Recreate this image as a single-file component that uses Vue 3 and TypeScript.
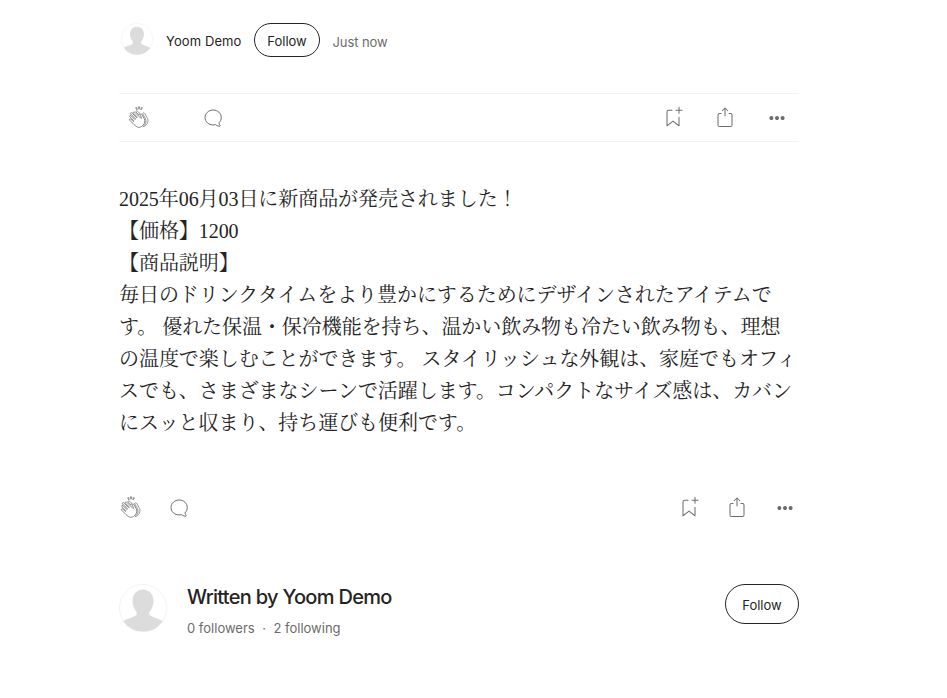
<template>
  <div class="page">
    <div class="meta">
      <svg class="avatar-small" viewBox="0 0 48 48"><use href="#avatar-shape" /></svg>
      <span class="author">Yoom Demo</span>
      <button class="follow-small">Follow</button>
      <span class="time">Just now</span>
    </div>

    <div class="actions top">
      <div class="group">
        <svg class="icon clap" viewBox="0 0 24 24"><use href="#icon-clap" /></svg>
        <svg class="icon" viewBox="0 0 24 24"><use href="#icon-reply" /></svg>
      </div>
      <div class="group right">
        <svg class="icon" viewBox="0 0 24 24"><use href="#icon-save" /></svg>
        <svg class="icon" viewBox="0 0 24 24"><use href="#icon-share" /></svg>
        <svg class="icon" viewBox="0 0 24 24"><use href="#icon-more" /></svg>
      </div>
    </div>

    <div class="article">
      <p v-for="line in lines" :key="line">{{ line }}</p>
    </div>

    <div class="actions bottom">
      <div class="group">
        <svg class="icon clap" viewBox="0 0 24 24"><use href="#icon-clap" /></svg>
        <svg class="icon" viewBox="0 0 24 24"><use href="#icon-reply" /></svg>
      </div>
      <div class="group right">
        <svg class="icon" viewBox="0 0 24 24"><use href="#icon-save" /></svg>
        <svg class="icon" viewBox="0 0 24 24"><use href="#icon-share" /></svg>
        <svg class="icon" viewBox="0 0 24 24"><use href="#icon-more" /></svg>
      </div>
    </div>

    <div class="written">
      <svg class="avatar-large" viewBox="0 0 48 48"><use href="#avatar-shape" /></svg>
      <div class="written-info">
        <div class="written-name">Written by Yoom Demo</div>
        <div class="written-stats">
          <span>0 followers</span>
          <span class="dot">·</span>
          <span>2 following</span>
        </div>
      </div>
      <button class="follow-large">Follow</button>
    </div>

    <svg class="defs" width="0" height="0">
      <defs>
        <g id="avatar-shape">
          <circle cx="24" cy="24" r="23.6" fill="#fff" stroke="#f0f0f0" stroke-width="0.8" />
          <path fill="#dcdcdc" d="M24 5.500c6.400 0 10.500 5 10.500 11.500 0 4.500-1.800 8-3.700 10.400-1 1.300-.8 3.500.7 4.400 3 1.800 8.500 3 12.200 5.200A23.600 23.600 0 0 1 24 47.600 23.600 23.600 0 0 1 4.300 37c3.700-2.200 9.200-3.400 12.200-5.200 1.500-.9 1.700-3.100.7-4.400-1.900-2.400-3.700-5.900-3.700-10.400C13.500 10.500 17.600 5.500 24 5.500z" />
        </g>
        <g id="icon-clap">
          <path fill-rule="evenodd" clip-rule="evenodd" d="M11.37.828 12 3.282l.63-2.454zM15.421 1.84l-1.185-.388-.338 2.5zM9.757 1.452l-1.184.389 1.523 2.112zM20.253 11.84 17.75 7.438c-.238-.353-.57-.584-.93-.643a.96.96 0 0 0-.753.183 1.13 1.13 0 0 0-.443.695c.014.019.03.033.044.053l2.352 4.138c1.614 2.95 1.1 5.771-1.525 8.395a7 7 0 0 1-.454.415c.997-.13 1.927-.61 2.773-1.457 2.705-2.704 2.517-5.585 1.438-7.377M12.066 9.01c-.129-.687.08-1.299.573-1.773l-2.062-2.063a1.123 1.123 0 0 0-1.555 0 1.1 1.1 0 0 0-.273.521z" fill="none" stroke="currentColor" stroke-width="0.7" />
          <path fill-rule="evenodd" clip-rule="evenodd" d="M14.741 8.309c-.18-.267-.446-.455-.728-.502a.67.67 0 0 0-.533.127c-.146.113-.59.458-.199 1.296l1.184 2.503a.448.448 0 0 1-.236.755.445.445 0 0 1-.483-.248L7.614 6.106A.816.816 0 1 0 6.459 7.26l3.643 3.644a.446.446 0 1 1-.631.63L5.83 7.896l-1.03-1.03a.82.82 0 0 0-1.395.577.81.81 0 0 0 .24.576l1.027 1.028 3.643 3.643a.444.444 0 0 1-.144.728.44.44 0 0 1-.486-.098l-3.64-3.64a.82.82 0 0 0-1.335.263.81.81 0 0 0 .178.89l1.535 1.534 2.287 2.288a.445.445 0 0 1-.63.63l-2.287-2.288a.813.813 0 0 0-1.393.578c0 .216.086.424.238.577l4.403 4.403c2.79 2.79 5.495 4.119 8.681.931 2.269-2.271 2.708-4.588 1.342-7.086z" fill="none" stroke="currentColor" stroke-width="0.8" />
        </g>
        <g id="icon-reply">
          <path d="M18.006 16.803c1.533-1.456 2.234-3.325 2.234-5.321C20.24 7.357 16.709 4 12.191 4S4 7.357 4 11.482c0 4.126 3.674 7.482 8.191 7.482.817 0 1.622-.111 2.393-.327.231.2.48.391.744.559 1.06.693 2.203 1.044 3.399 1.044.224-.008.4-.112.486-.287a.49.49 0 0 0-.042-.518c-.495-.67-.845-1.364-1.04-2.057a4 4 0 0 1-.125-.598z" fill="none" stroke="currentColor" stroke-width="1" />
        </g>
        <g id="icon-save">
          <path d="M17.5 1.25a.5.5 0 0 1 1 0v2.5H21a.5.5 0 0 1 0 1h-2.5v2.5a.5.5 0 0 1-1 0v-2.5H15a.5.5 0 0 1 0-1h2.5zm-11 4.5a1 1 0 0 1 1-1H11a.5.5 0 0 0 0-1H7.500a2 2 0 0 0-2 2v14a.5.5 0 0 0 .8.4l5.700-4.400 5.700 4.400a.5.5 0 0 0 .8-.4v-8.500a.5.5 0 0 0-1 0v7.480l-5.200-4a.5.5 0 0 0-.6 0l-5.200 4z" />
        </g>
        <g id="icon-share">
          <path fill-rule="evenodd" clip-rule="evenodd" d="M15.218 4.931a.4.4 0 0 1-.118.132l.012.006a.45.45 0 0 1-.292.074.5.5 0 0 1-.3-.13l-2.020-2.020v7.070c0 .28-.23.5-.5.5s-.5-.22-.5-.5v-7.040l-2 2a.45.45 0 0 1-.57.04h-.02a.4.4 0 0 1-.16-.3.4.4 0 0 1 .1-.32l2.800-2.800a.5.5 0 0 1 .7 0l2.800 2.790a.42.42 0 0 1 .068.498m-.106.138.008.004v-.01zM16 7.063h1.500a2 2 0 0 1 2 2v10a2 2 0 0 1-2 2h-11c-1.100 0-2-.9-2-2v-10a2 2 0 0 1 2-2H8a.5.5 0 0 1 .35.15.5.5 0 0 1 .15.35.5.5 0 0 1-.15.35.5.5 0 0 1-.35.15H6.400c-.5 0-.9.4-.9.9v10.200a.9.9 0 0 0 .9.9h11.200c.5 0 .9-.4.9-.9v-10.200c0-.5-.4-.9-.9-.9H16a.5.5 0 0 1 0-1" />
        </g>
        <g id="icon-more">
          <path d="M4.385 12c0 .55.2 1.020.59 1.410.39.4.86.59 1.410.59s1.020-.2 1.410-.59c.4-.39.59-.86.59-1.410s-.2-1.020-.59-1.410a1.930 1.930 0 0 0-1.410-.59c-.55 0-1.020.2-1.410.59-.4.39-.59.86-.59 1.410m5.620 0c0 .55.2 1.020.58 1.410.4.4.87.59 1.420.59s1.020-.2 1.410-.59c.4-.39.59-.86.59-1.410s-.2-1.020-.59-1.410a1.930 1.930 0 0 0-1.410-.59c-.55 0-1.030.2-1.420.59s-.58.86-.58 1.410m5.600 0c0 .55.2 1.020.58 1.410.4.4.87.59 1.430.59s1.030-.2 1.420-.59.58-.86.58-1.410-.2-1.020-.58-1.410a1.930 1.930 0 0 0-1.420-.59c-.56 0-1.040.2-1.430.59s-.58.86-.58 1.410" />
        </g>
      </defs>
    </svg>
  </div>
</template>

<script setup lang="ts">
const lines: string[] = [
  '2025年06月03日に新商品が発売されました！',
  '【価格】1200',
  '【商品説明】',
  '毎日のドリンクタイムをより豊かにするためにデザインされたアイテムです。 優れた保温・保冷機能を持ち、温かい飲み物も冷たい飲み物も、理想の温度で楽しむことができます。 スタイリッシュな外観は、家庭でもオフィスでも、さまざまなシーンで活躍します。コンパクトなサイズ感は、カバンにスッと収まり、持ち運びも便利です。'
];
</script>

<style scoped>
.page {
  width: 680px;
  margin-left: 119px;
  color: #242424;
  font-family: Inter, "Liberation Sans", "Noto Sans CJK JP", sans-serif;
}

.defs {
  position: absolute;
}

.meta {
  display: flex;
  align-items: center;
  height: 34px;
  padding-top: 23px;
  font-size: 13px;
}

.avatar-small {
  align-self: flex-start;
  width: 32px;
  height: 32px;
  margin-left: 2px;
}

.author {
  margin-left: 13px;
  margin-top: 2px;
  letter-spacing: 0.1px;
}

.follow-small,
.follow-large {
  font-family: inherit;
  color: #242424;
  background: #fff;
  border: 1px solid #242424;
  padding: 1px 0 0;
  font-size: 13px;
}

.follow-small {
  width: 66px;
  height: 34px;
  margin-left: 12px;
  padding-left: 1px;
  border-radius: 17px;
}

.time {
  margin-left: 13px;
  margin-top: 4px;
  letter-spacing: -0.1px;
  color: #6b6b6b;
}

.actions {
  display: flex;
  align-items: center;
  justify-content: space-between;
  color: #6b6b6b;
}

.actions.top {
  height: 47px;
  margin-top: 36px;
  padding: 0 10px 0 8px;
  border-top: 1px solid #f2f2f2;
  border-bottom: 1px solid #f2f2f2;
}

.actions.bottom {
  height: 48px;
  margin-top: 45px;
  padding: 0 2px 0 0;
}

.group {
  display: flex;
  align-items: center;
  gap: 50px;
}

.actions.bottom .group {
  gap: 24px;
}

.group.right {
  gap: 28px;
}

.icon {
  display: block;
  width: 24px;
  height: 24px;
  fill: currentColor;
}

.article {
  margin-top: 41px;
  font-family: "Liberation Serif", "Noto Serif CJK JP", "Noto Sans CJK JP", serif;
  font-size: 20px;
  line-height: 32px;
  letter-spacing: -0.06px;
  color: #242424;
}

.article p {
  margin: 0;
}

.written {
  display: flex;
  align-items: flex-start;
  margin-top: 52px;
}

.avatar-large {
  width: 48px;
  height: 48px;
  flex-shrink: 0;
}

.written-info {
  flex: 1;
  margin-left: 20px;
}

.written-name {
  font-size: 20px;
  font-weight: 500;
  line-height: 26px;
  letter-spacing: -0.7px;
}

.written-stats {
  display: flex;
  gap: 7.5px;
  margin-top: 10px;
  font-size: 13px;
  color: #6b6b6b;
}

.follow-large {
  width: 74px;
  height: 40px;
  border-radius: 20px;
}
</style>
